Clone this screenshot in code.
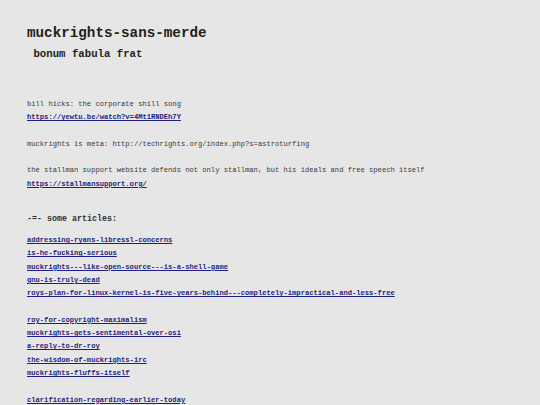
export default function App() {
  const group1 = [
    'addressing-ryans-libressl-concerns',
    'is-he-fucking-serious',
    'muckrights---like-open-source---is-a-shell-game',
    'gnu-is-truly-dead',
    'roys-plan-for-linux-kernel-is-five-years-behind---completely-impractical-and-less-free',
  ]
  const group2 = [
    'roy-for-copyright-maximalism',
    'muckrights-gets-sentimental-over-osi',
    'a-reply-to-dr-roy',
    'the-wisdom-of-muckrights-irc',
    'muckrights-fluffs-itself',
  ]
  const group3 = ['clarification-regarding-earlier-today']

  const link = 'block h-[13.3px] font-bold text-[#1f1f82] underline'

  return (
    <div className="min-h-[405px] w-[540px] overflow-hidden bg-[#e6e6e6] px-[27px] pt-[24px] text-[7.13px] leading-[13.3px] text-[#3a3a3a] [font-family:'Liberation_Mono',monospace]">
      {/* header */}
      <h1 className="text-[14.26px] font-bold leading-[18px] text-[#222218]">muckrights-sans-merde</h1>
      <h2 className="mt-[3px] text-[10.7px] font-bold leading-[18px] text-[#222218]">&nbsp;bonum fabula frat</h2>

      <div className="mt-[35px]">
        <div className="h-[13.3px]">bill hicks: the corporate shill song</div>
        <a className={link}>https://yewtu.be/watch?v=4Mt1RNDEh7Y</a>
        <div className="h-[13.3px]" />
        <div className="h-[13.3px]">muckrights is meta: http://techrights.org/index.php?s=astroturfing</div>
        <div className="h-[13.3px]" />
        <div className="h-[13.3px]">the stallman support website defends not only stallman, but his ideals and free speech itself</div>
        <a className={link}>https://stallmansupport.org/</a>
      </div>

      <h3 className="mt-[22px] text-[8.33px] font-bold leading-[12px] text-[#333]">-=- some articles:</h3>

      <div className="mt-[9px]">
        {group1.map((t) => (
          <a key={t} className={link}>{t}</a>
        ))}
        <div className="h-[13.3px]" />
        {group2.map((t) => (
          <a key={t} className={link}>{t}</a>
        ))}
        <div className="h-[13.3px]" />
        {group3.map((t) => (
          <a key={t} className={link}>{t}</a>
        ))}
      </div>
    </div>
  )
}
